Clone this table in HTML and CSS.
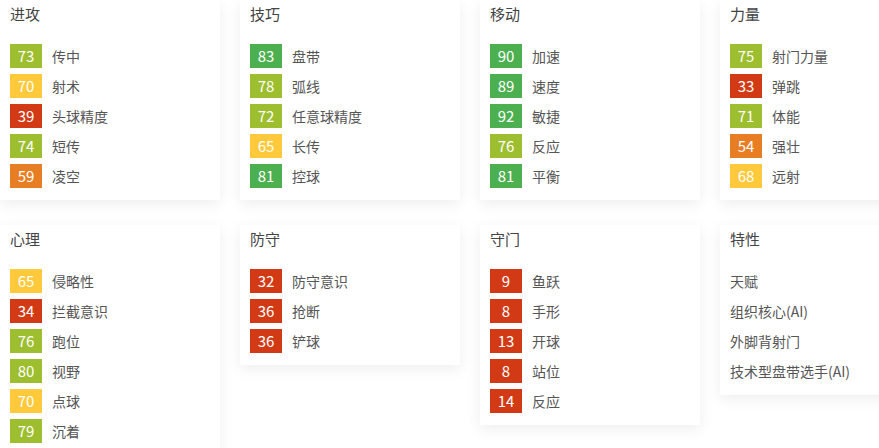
FILE: index.html
```html
<!DOCTYPE html>
<html lang="zh-CN">
<head>
    <meta charset="UTF-8">
    <meta name="viewport" content="width=device-width, initial-scale=1.0">
    <title>球员属性</title>
    <link rel="stylesheet" href="styles.css">
</head>
<body>
    <div class="grid">
        <div class="card">
            <div class="title">进攻</div>
            <div class="row"><span class="badge lime">73</span>传中</div>
            <div class="row"><span class="badge yellow">70</span>射术</div>
            <div class="row"><span class="badge red">39</span>头球精度</div>
            <div class="row"><span class="badge lime">74</span>短传</div>
            <div class="row"><span class="badge orange">59</span>凌空</div>
        </div>
        <div class="card">
            <div class="title">技巧</div>
            <div class="row"><span class="badge green">83</span>盘带</div>
            <div class="row"><span class="badge lime">78</span>弧线</div>
            <div class="row"><span class="badge lime">72</span>任意球精度</div>
            <div class="row"><span class="badge yellow">65</span>长传</div>
            <div class="row"><span class="badge green">81</span>控球</div>
        </div>
        <div class="card">
            <div class="title">移动</div>
            <div class="row"><span class="badge green">90</span>加速</div>
            <div class="row"><span class="badge green">89</span>速度</div>
            <div class="row"><span class="badge green">92</span>敏捷</div>
            <div class="row"><span class="badge lime">76</span>反应</div>
            <div class="row"><span class="badge green">81</span>平衡</div>
        </div>
        <div class="card">
            <div class="title">力量</div>
            <div class="row"><span class="badge lime">75</span>射门力量</div>
            <div class="row"><span class="badge red">33</span>弹跳</div>
            <div class="row"><span class="badge lime">71</span>体能</div>
            <div class="row"><span class="badge orange">54</span>强壮</div>
            <div class="row"><span class="badge yellow">68</span>远射</div>
        </div>

        <div class="card">
            <div class="title">心理</div>
            <div class="row"><span class="badge yellow">65</span>侵略性</div>
            <div class="row"><span class="badge red">34</span>拦截意识</div>
            <div class="row"><span class="badge lime">76</span>跑位</div>
            <div class="row"><span class="badge lime">80</span>视野</div>
            <div class="row"><span class="badge yellow">70</span>点球</div>
            <div class="row"><span class="badge lime">79</span>沉着</div>
        </div>
        <div class="card">
            <div class="title">防守</div>
            <div class="row"><span class="badge red">32</span>防守意识</div>
            <div class="row"><span class="badge red">36</span>抢断</div>
            <div class="row"><span class="badge red">36</span>铲球</div>
        </div>
        <div class="card">
            <div class="title">守门</div>
            <div class="row"><span class="badge red">9</span>鱼跃</div>
            <div class="row"><span class="badge red">8</span>手形</div>
            <div class="row"><span class="badge red">13</span>开球</div>
            <div class="row"><span class="badge red">8</span>站位</div>
            <div class="row"><span class="badge red">14</span>反应</div>
        </div>
        <div class="card">
            <div class="title">特性</div>
            <div class="row">天赋</div>
            <div class="row">组织核心(AI)</div>
            <div class="row">外脚背射门</div>
            <div class="row">技术型盘带选手(AI)</div>
        </div>
    </div>
</body>
</html>
```

FILE: styles.css
```css
html, body{
    margin: 0;
    padding: 0;
    overflow: hidden;
    background: #fff;
}
body{
    font-family: "Noto Sans CJK SC", "Liberation Sans", sans-serif;
    font-size: 14px;
    color: #555;
}
.grid{
    display: grid;
    grid-template-columns: repeat(4, 220px);
    column-gap: 20px;
    row-gap: 25px;
    align-items: start;
    width: 940px;
}
.card{
    background: #fff;
    padding: 0 10px 6px;
    box-shadow: 0 4px 14px rgba(0, 0, 0, 0.07);
}
.title{
    font-size: 15px;
    line-height: 28px;
    height: 28px;
    margin-bottom: 16px;
    color: #444;
}
.row{
    display: flex;
    align-items: center;
    height: 24px;
    line-height: 24px;
    margin-bottom: 6px;
    white-space: nowrap;
}
.badge{
    width: 32px;
    height: 24px;
    line-height: 24px;
    margin-right: 10px;
    text-align: center;
    color: #fff;
    font-size: 15px;
}
.green{
    background-color: #4caf50;
}
.lime{
    background-color: #9cbe2f;
}
.yellow{
    background-color: #ffc93c;
}
.orange{
    background-color: #e87e24;
}
.red{
    background-color: #d23a16;
}
```
